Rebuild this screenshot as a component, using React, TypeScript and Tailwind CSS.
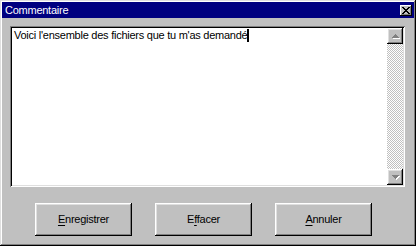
import React from "react";

const raised =
  "shadow-[inset_-1px_-1px_#000,inset_1px_1px_#fff,inset_-2px_-2px_#808080,inset_2px_2px_#dfdfdf]";

function CloseGlyph() {
  const rows: [number, number][][] = [
    [[0, 2], [6, 2]],
    [[1, 2], [5, 2]],
    [[2, 4]],
    [[3, 2]],
    [[2, 4]],
    [[1, 2], [5, 2]],
    [[0, 2], [6, 2]],
  ];
  return (
    <svg width="8" height="7" viewBox="0 0 8 7" shapeRendering="crispEdges">
      {rows.map((r, y) =>
        r.map(([x, w], i) => <rect key={`${y}-${i}`} x={x} y={y} width={w} height={1} fill="#000" />)
      )}
    </svg>
  );
}

function Arrow({ dir }: { dir: "up" | "down" }) {
  const up = "M0 4 L4 0 L8 4 Z";
  const down = "M0 0 L8 0 L4 4 Z";
  return (
    <svg width="9" height="5" viewBox="0 0 9 5" shapeRendering="crispEdges">
      <path d={dir === "up" ? up : down} fill="#fff" transform="translate(1,1)" />
      <path d={dir === "up" ? up : down} fill="#808080" />
    </svg>
  );
}

function Btn({ pre, mn, rest }: { pre?: string; mn: string; rest: string }) {
  return (
    <div
      className={`w-[97px] h-[33px] flex items-center justify-center text-[11px] tracking-[-0.25px] text-black ${raised}`}
    >
      <span>
        {pre}
        <span className="underline underline-offset-[2px]">{mn}</span>
        {rest}
      </span>
    </div>
  );
}

export default function App() {
  return (
    <div
      className="w-[416px] h-[246px] bg-[#c0c0c0] p-[2px] flex flex-col shadow-[inset_-1px_-1px_#000,inset_1px_1px_#dfdfdf,inset_-2px_-2px_#808080,inset_2px_2px_#fff]"
      style={{ fontFamily: '"Liberation Sans", Arial, sans-serif' }}
    >
      <div className="h-[16px] bg-[#000080] flex items-center justify-between pl-[3px] pr-[2px]">
        <span className="text-white text-[11px] tracking-[-0.25px] leading-[13px]">Commentaire</span>
        <div className="w-[12px] h-[11px] bg-[#c0c0c0] flex items-center justify-center shadow-[inset_-1px_-1px_#000,inset_1px_1px_#fff,inset_-2px_-2px_#808080]">
          <CloseGlyph />
        </div>
      </div>

      <div className="pl-[8px] pt-[8px]">
        <div className="w-[395px] h-[161px] p-[2px] bg-white flex shadow-[inset_1px_1px_#808080,inset_-1px_-1px_#fff,inset_2px_2px_#000,inset_-2px_-2px_#dfdfdf]">
          <div className="flex-1 pl-[2px] pt-[1px] text-[11px] tracking-[-0.25px] leading-[13px] text-black">
            Voici l'ensemble des fichiers que tu m'as demandé
            <span className="inline-block w-[2px] h-[13px] bg-black align-top" />
          </div>
          <div className="w-[16px] flex flex-col">
            <div className={`w-[16px] h-[16px] bg-[#c0c0c0] flex items-center justify-center ${raised}`}>
              <Arrow dir="up" />
            </div>
            <div className="flex-1 bg-[repeating-conic-gradient(#c0c0c0_0_25%,#fff_0_50%)] bg-[length:2px_2px]" />
            <div className={`w-[16px] h-[16px] bg-[#c0c0c0] flex items-center justify-center ${raised}`}>
              <Arrow dir="down" />
            </div>
          </div>
        </div>
      </div>

      <div className="flex gap-[23px] pl-[33px] mt-[16px]">
        <Btn mn="E" rest="nregistrer" />
        <Btn pre="E" mn="f" rest="facer" />
        <Btn mn="A" rest="nnuler" />
      </div>
    </div>
  );
}
